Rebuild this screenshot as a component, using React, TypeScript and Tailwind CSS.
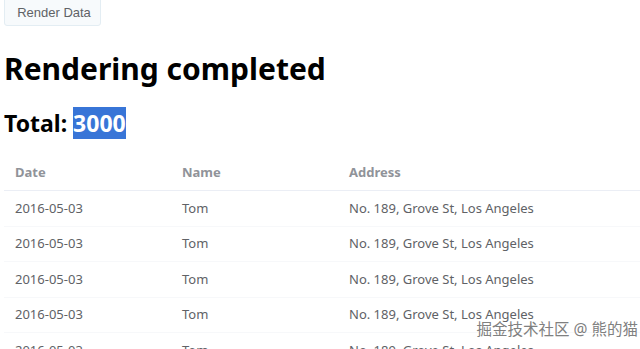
import React from "react";

const rows = Array.from({ length: 6 }, () => ({
  date: "2016-05-03",
  name: "Tom",
  address: "No. 189, Grove St, Los Angeles",
}));

export default function App() {
  return (
    <div className="relative h-[349px] w-[640px] overflow-hidden bg-white" style={{ fontFamily: '"Noto Sans", "Noto Sans CJK SC", sans-serif' }}>
      <div className="pl-[4px]">
        <button className="-mt-[6px] flex h-[32px] w-[97px] items-center justify-center rounded-[3px] border border-[#e3edf3] bg-[#f7fafc] pl-[3px] pt-[6px] text-[13px] text-[#606266]" style={{ fontFamily: '"Liberation Sans", Arial, sans-serif' }}>
          Render Data
        </button>
        <h1 className="mt-[23px] text-[30px] font-bold leading-[40px] text-black">Rendering completed</h1>
        <h2 className="mt-[19px] text-[23px] font-bold leading-[30px] text-black">
          Total: <span className="bg-[#3875d7] text-white">3000</span>
        </h2>
        <div className="mt-[17px] w-[636px] text-[13px]">
          <div className="grid h-[36px] grid-cols-[167px_167px_1fr] items-center border-b border-[#ebeef5] font-bold text-[#909399]">
            <div className="pl-[11px]">Date</div>
            <div className="pl-[11px]">Name</div>
            <div className="pl-[11px]">Address</div>
          </div>
          {rows.map((r, i) => (
            <div key={i} className="grid h-[35.5px] grid-cols-[167px_167px_1fr] items-center border-b border-[#f7f8fa] text-[#606266]">
              <div className="pl-[11px]">{r.date}</div>
              <div className="pl-[11px]">{r.name}</div>
              <div className="pl-[11px]">{r.address}</div>
            </div>
          ))}
        </div>
      </div>
      <div className="absolute right-[2px] top-[318px] text-[15.5px] text-[#808080]" style={{ textShadow: "0 0 2px #fff" }}>
        掘金技术社区 @ 熊的猫
      </div>
    </div>
  );
}
